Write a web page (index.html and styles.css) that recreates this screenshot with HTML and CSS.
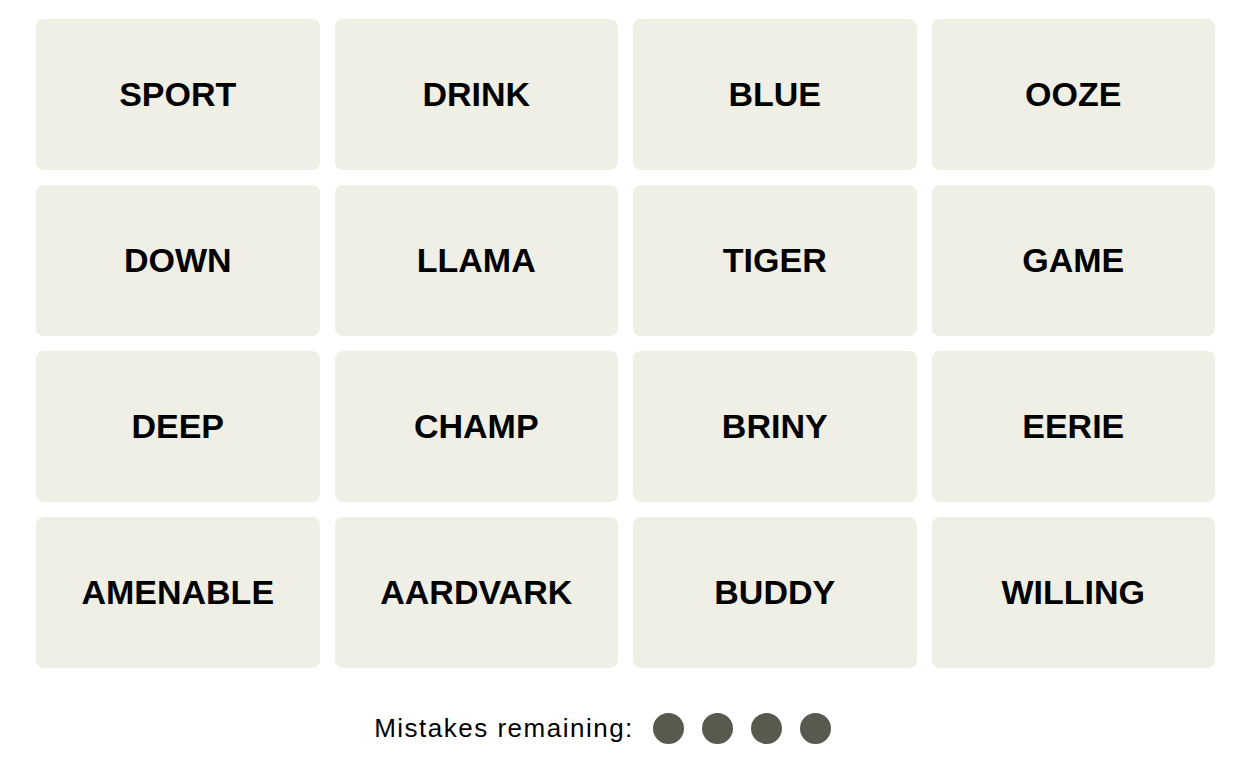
FILE: index.html
```html
<!DOCTYPE html>
<html lang="en">
<head>
    <meta charset="UTF-8">
    <meta name="viewport" content="width=device-width, initial-scale=1.0">
    <title>Connections</title>
    <link rel="stylesheet" href="styles.css">
</head>
<body>

<div class="board">
    <div class="grid">
        <button class="tile">SPORT</button>
        <button class="tile">DRINK</button>
        <button class="tile">BLUE</button>
        <button class="tile">OOZE</button>

        <button class="tile">DOWN</button>
        <button class="tile">LLAMA</button>
        <button class="tile">TIGER</button>
        <button class="tile">GAME</button>

        <button class="tile">DEEP</button>
        <button class="tile">CHAMP</button>
        <button class="tile">BRINY</button>
        <button class="tile">EERIE</button>

        <button class="tile">AMENABLE</button>
        <button class="tile">AARDVARK</button>
        <button class="tile">BUDDY</button>
        <button class="tile">WILLING</button>
    </div>

    <div class="mistakes">
        <span class="mistakes-label">Mistakes remaining:</span>
        <div class="dots">
            <span class="dot"></span>
            <span class="dot"></span>
            <span class="dot"></span>
            <span class="dot"></span>
        </div>
    </div>
</div>

</body>
</html>
```

FILE: styles.css
```css
body {
    margin: 0;
    background-color: #fff;
    font-family: 'Liberation Sans', Arial, sans-serif;
    color: #000;
}

.board {
    padding: 19px 35px 0 36px;
}

.grid {
    display: grid;
    grid-template-columns: repeat(4, 1fr);
    grid-auto-rows: 151px;
    gap: 15px;
}

.tile {
    border: none;
    border-radius: 8px;
    background-color: #efefe6;
    font-family: 'Liberation Sans', Arial, sans-serif;
    font-weight: 700;
    font-size: 34px;
    color: #000;
    padding: 0;
    cursor: pointer;
}

.mistakes {
    display: flex;
    justify-content: center;
    align-items: center;
    gap: 19px;
    margin-top: 45px;
    padding-right: 46px;
    height: 31px;
}

.mistakes-label {
    font-size: 26px;
    letter-spacing: 1.5px;
}

.dots {
    display: flex;
    gap: 18px;
}

.dot {
    width: 31px;
    height: 31px;
    border-radius: 50%;
    background-color: #5a594e;
}
```
